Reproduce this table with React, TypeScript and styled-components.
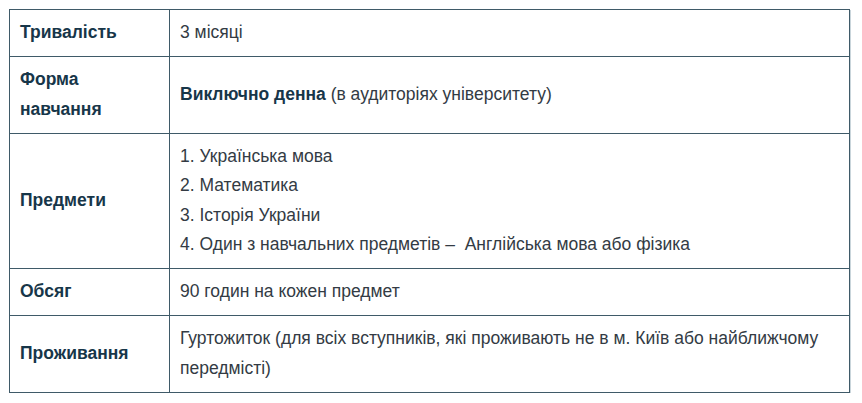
import React from "react";
import styled, { createGlobalStyle } from "styled-components";

const Global = createGlobalStyle`
  html, body { margin: 0; padding: 0; background: #ffffff; }
  body { font-family: "Liberation Sans", Arial, sans-serif; }
`;

const Wrap = styled.div`
  padding: 9px 0 0 9px;
`;

const Table = styled.table`
  border-collapse: collapse;
  width: 841px;
  font-size: 17.5px;
  line-height: 29.5px;
  border: 1px solid #3f5a68;
  box-shadow: 1px 1px 0 #c9d5db;
`;

const Row = styled.tr``;

const Label = styled.th`
  width: 139px;
  text-align: left;
  vertical-align: middle;
  padding: 8.25px 10px;
  border: 1px solid #3f5a68;
  font-weight: 700;
  color: #173649;
`;

const Value = styled.td`
  vertical-align: middle;
  padding: 8.25px 10px;
  border: 1px solid #3f5a68;
  color: #333b44;
`;

const Strong = styled.strong`
  font-weight: 700;
  color: #173649;
`;

const List = styled.ol`
  margin: 0;
  padding: 0;
  list-style: none;
`;

const Item = styled.li`
  margin: 0;
`;

const subjects = [
  "1. Українська мова",
  "2. Математика",
  "3. Історія України",
  "4. Один з навчальних предметів –\u00a0 Англійська мова або фізика",
];

export default function App() {
  return (
    <>
      <Global />
      <Wrap>
        <Table>
          <tbody>
            <Row>
              <Label>Тривалість</Label>
              <Value>3 місяці</Value>
            </Row>
            <Row>
              <Label>Форма навчання</Label>
              <Value>
                <Strong>Виключно денна</Strong> (в аудиторіях університету)
              </Value>
            </Row>
            <Row>
              <Label>Предмети</Label>
              <Value>
                <List>
                  {subjects.map((s) => (
                    <Item key={s}>{s}</Item>
                  ))}
                </List>
              </Value>
            </Row>
            <Row>
              <Label>Обсяг</Label>
              <Value>90 годин на кожен предмет</Value>
            </Row>
            <Row>
              <Label>Проживання</Label>
              <Value>
                Гуртожиток (для всіх вступників, які проживають не в м. Київ або найближчому передмісті)
              </Value>
            </Row>
          </tbody>
        </Table>
      </Wrap>
    </>
  );
}
